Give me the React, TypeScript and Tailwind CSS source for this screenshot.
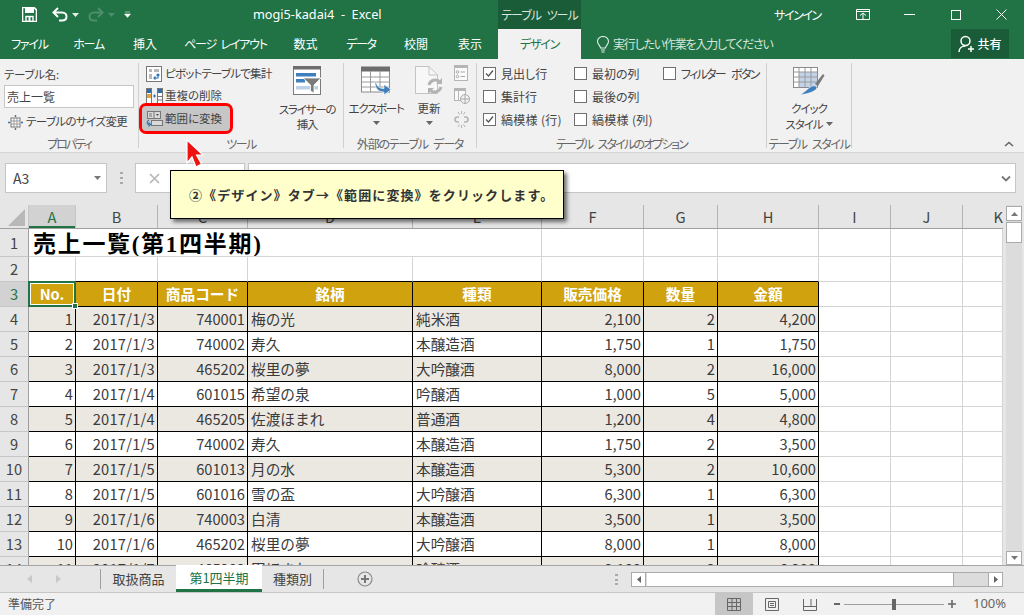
import React from "react";

const UI = "font-['Noto_Sans_CJK_JP','Noto_Sans',sans-serif] [font-feature-settings:'palt']";
const COLS = "grid grid-cols-[29px_47px_82px_90px_165px_129px_102px_74px_101px_72px_72px_40px]";

const rows: (string | number)[][] = [
  [1, "2017/1/3", "740001", "梅の光", "純米酒", "2,100", 2, "4,200"],
  [2, "2017/1/3", "740002", "寿久", "本醸造酒", "1,750", 1, "1,750"],
  [3, "2017/1/3", "465202", "桜里の夢", "大吟醸酒", "8,000", 2, "16,000"],
  [4, "2017/1/4", "601015", "希望の泉", "吟醸酒", "1,000", 5, "5,000"],
  [5, "2017/1/4", "465205", "佐渡ほまれ", "普通酒", "1,200", 4, "4,800"],
  [6, "2017/1/5", "740002", "寿久", "本醸造酒", "1,750", 2, "3,500"],
  [7, "2017/1/5", "601013", "月の水", "本醸造酒", "5,300", 2, "10,600"],
  [8, "2017/1/5", "601016", "雪の盃", "大吟醸酒", "6,300", 1, "6,300"],
  [9, "2017/1/6", "740003", "白清", "本醸造酒", "3,500", 1, "3,500"],
  [10, "2017/1/6", "465202", "桜里の夢", "大吟醸酒", "8,000", 1, "8,000"],
  [11, "2017/1/7", "465203", "田ほまれ", "吟醸酒", "3,100", 2, "6,200"],
];

function Save() {
  return (
    <svg width="15" height="15" viewBox="0 0 15 15" className="text-white">
      <path d="M0.5 0.5H12L14.5 3V14.5H0.5Z" fill="none" stroke="currentColor" strokeWidth="1.6" />
      <rect x="3" y="1" width="9" height="5" fill="currentColor" />
      <rect x="4" y="9.5" width="7" height="5" fill="none" stroke="currentColor" strokeWidth="1.4" />
      <rect x="6.5" y="10" width="2" height="4" fill="currentColor" />
    </svg>
  );
}

function Caret({ className = "" }: { className?: string }) {
  return (
    <svg width="7" height="4" viewBox="0 0 7 4" className={className}>
      <path d="M0 0H7L3.5 4Z" fill="currentColor" />
    </svg>
  );
}

function Undo({ flip = false, className = "" }: { flip?: boolean; className?: string }) {
  return (
    <svg width="16" height="15" viewBox="0 0 16 15" className={className} style={flip ? { transform: "scaleX(-1)" } : undefined}>
      <path d="M2 5.5H10C13 5.5 14.5 7.5 14.5 9.5C14.5 12 12.5 13.5 10 13.5H7" fill="none" stroke="currentColor" strokeWidth="2" />
      <path d="M6 1L1.5 5.5L6 10" fill="none" stroke="currentColor" strokeWidth="2" />
    </svg>
  );
}

function Pivot() {
  return (
    <svg width="16" height="16" viewBox="0 0 16 16" className="shrink-0">
      <rect x="0.5" y="0.5" width="15" height="15" fill="#fff" stroke="#777" />
      <path d="M3 3H6V6H3ZM8 3H13V6H8ZM3 8H6V13H3Z" fill="#b9b9b9" />
      <path d="M8 12H12V8M10.5 9.5L12 8L13.5 9.5M9.5 10.5L8 12L9.5 13.5" fill="none" stroke="#2f78b5" strokeWidth="1.2" />
    </svg>
  );
}

function Dedup() {
  return (
    <svg width="17" height="16" viewBox="0 0 17 16" className="shrink-0">
      <rect x="0.5" y="0.5" width="5" height="15" fill="#fff" stroke="#777" />
      <rect x="11.5" y="0.5" width="5" height="15" fill="#fff" stroke="#777" />
      <rect x="1" y="1" width="4" height="4" fill="#2f6da8" />
      <rect x="12" y="1" width="4" height="4" fill="#2f6da8" />
      <rect x="1" y="6" width="4" height="4" fill="#e3a33c" />
      <path d="M12 8.5H16M12 12H16" stroke="#777" />
      <path d="M7 8H10M8.5 6.5V9.5" stroke="#2f6da8" />
    </svg>
  );
}

function Convert() {
  return (
    <svg width="17" height="16" viewBox="0 0 17 16" className="shrink-0">
      <rect x="1.5" y="0.5" width="13" height="7" fill="#d8d8d8" stroke="#777" />
      <path d="M8 0.5V7.5" stroke="#777" />
      <path d="M3 3H6M3 5H6" stroke="#777" />
      <path d="M10 3H13L11.5 5Z" fill="#555" />
      <rect x="5.5" y="9.5" width="11" height="5" fill="#d8d8d8" stroke="#777" />
      <path d="M3 9C0.5 10 0.5 13.5 3.5 13.5M2.5 11.5L4.5 13.5L2.5 15.5" fill="none" stroke="#2f78b5" strokeWidth="1.1" />
    </svg>
  );
}

function Slicer() {
  return (
    <svg width="29" height="29" viewBox="0 0 29 29">
      <rect x="0.5" y="0.5" width="27" height="28" fill="#fff" stroke="#7a7a7a" />
      <rect x="0" y="0" width="28" height="3.5" fill="#6d6d6d" />
      <rect x="3" y="7" width="20" height="3.5" fill="#3f7fbd" />
      <rect x="3" y="13" width="9" height="3.5" fill="#3f7fbd" />
      <rect x="3" y="20" width="22" height="3.5" fill="#bcd1e8" />
      <path d="M10 12H28L21 19V27L17.5 25V19Z" fill="#7a7a7a" stroke="#fff" strokeWidth="0.8" />
    </svg>
  );
}

function ExportIcon() {
  return (
    <svg width="31" height="30" viewBox="0 0 31 30">
      <rect x="0.5" y="2" width="28" height="24" fill="#fff" stroke="#8a8a8a" />
      <rect x="0" y="0.5" width="29" height="5" fill="#6d6d6d" />
      <path d="M0.5 11H28.5M0.5 16H28.5M0.5 21H28.5M9.5 5V26M19 5V26" stroke="#9a9a9a" />
      <path d="M15 16C16 21 19 22.5 23 22.5V18.5L30 23.5L23 29V26C17 26 14 22 14 16Z" fill="#3f7fbd" stroke="#fff" strokeWidth="0.6" />
    </svg>
  );
}

function RefreshIcon() {
  return (
    <svg width="28" height="30" viewBox="0 0 28 30">
      <path d="M0.5 0.5H14L22.5 9V27.5H0.5Z" fill="#f7f7f7" stroke="#c3c3c3" />
      <path d="M14 0.5V9H22.5" fill="none" stroke="#c3c3c3" />
      <path d="M14 19A6.5 6.5 0 0 1 25 16M26 21A6.5 6.5 0 0 1 15 24" fill="none" stroke="#b3b3b3" strokeWidth="3" />
      <path d="M27 12V18H21ZM13 28V22H19Z" fill="#b3b3b3" />
    </svg>
  );
}

function SmallProps() {
  return (
    <svg width="14" height="16" viewBox="0 0 14 16">
      <rect x="0.5" y="0.5" width="13" height="15" fill="#fafafa" stroke="#b5b5b5" />
      <rect x="0" y="0" width="14" height="3" fill="#b5b5b5" />
      <circle cx="3.5" cy="7" r="1.3" fill="none" stroke="#aaa" />
      <circle cx="3.5" cy="11.5" r="1.3" fill="none" stroke="#aaa" />
      <path d="M6.5 7H11M6.5 11.5H11" stroke="#aaa" />
    </svg>
  );
}

function SmallBrowser() {
  return (
    <svg width="16" height="16" viewBox="0 0 16 16">
      <rect x="0.5" y="0.5" width="11" height="12" fill="#fafafa" stroke="#b5b5b5" />
      <rect x="0" y="0" width="12" height="3" fill="#b5b5b5" />
      <path d="M4.5 3V12" stroke="#b5b5b5" />
      <circle cx="11" cy="11" r="4.5" fill="#f1f1f1" stroke="#aaa" />
      <path d="M6.5 11H15.5M11 6.5V15.5" stroke="#aaa" />
    </svg>
  );
}

function SmallUnlink() {
  return (
    <svg width="15" height="17" viewBox="0 0 15 17">
      <path d="M5 6H3.5A2.5 2.5 0 0 0 3.5 11H5M10 6H11.5A2.5 2.5 0 0 1 11.5 11H10" fill="none" stroke="#b5b5b5" strokeWidth="1.6" />
      <path d="M7.5 0V3M4 1L5.5 3.5M11 1L9.5 3.5M7.5 14V17M4 16L5.5 13.5M11 16L9.5 13.5" stroke="#b5b5b5" />
    </svg>
  );
}

function QuickStyle() {
  return (
    <svg width="32" height="31" viewBox="0 0 32 31">
      <rect x="0.5" y="0.5" width="24" height="20" fill="#fff" stroke="#8a8a8a" />
      <rect x="6" y="5" width="18" height="15" fill="#c2d3e8" />
      <path d="M0.5 5H24.5M0.5 10H24.5M0.5 15H24.5M6 0.5V20.5M12 0.5V20.5M18 0.5V20.5" stroke="#9a9a9a" />
      <path d="M22 17L30 7L31.5 8.5L25 19Z" fill="#7a7a7a" />
      <path d="M19 19C23 18 24.5 20 23.5 22C21 25 14 27 7 28C12 25 15 21 19 19Z" fill="#3f7fbd" stroke="#fff" strokeWidth="0.6" />
    </svg>
  );
}

function Check({ on = false }: { on?: boolean }) {
  return (
    <span className="w-[13px] h-[13px] border border-[#6f6f6f] bg-white flex items-center justify-center shrink-0">
      {on && (
        <svg width="11" height="11" viewBox="0 0 11 11">
          <path d="M2 5.5L4.5 8L9 2.5" fill="none" stroke="#555" strokeWidth="1.3" />
        </svg>
      )}
    </span>
  );
}

function CheckRow({ label, on, className = "" }: { label: string; on?: boolean; className?: string }) {
  return (
    <div className="flex items-center h-[23px] gap-[5px] text-[12px] text-[#444] whitespace-nowrap">
      <Check on={on} />
      <span className={className}>{label}</span>
    </div>
  );
}

function Group({ label, width, labelClass = "", children }: { label: string; width: string; labelClass?: string; children: React.ReactNode }) {
  return (
    <div className={`${width} shrink-0 h-[93px] flex flex-col relative`}>
      <div className="h-[75px] flex">{children}</div>
      <div className={`text-center text-[12px] leading-[16px] mt-[2px] text-[#666] whitespace-nowrap ${labelClass}`}>{label}</div>
    </div>
  );
}

function Sep() {
  return <div className="w-px h-[85px] mt-[4px] bg-[#d0d0d0] shrink-0" />;
}

function Tab({ children, width, tight = true }: { children: React.ReactNode; width: string; tight?: boolean }) {
  return <div className={`${width} shrink-0 text-center whitespace-nowrap [word-spacing:3px] ${tight ? "tracking-[-1.2px]" : ""}`}>{children}</div>;
}

function TitleBar() {
  return (
    <div className="h-[29px] bg-[#217346] flex items-center text-white shrink-0">
      <div className="ml-[22px]"><Save /></div>
      <Undo className="ml-[15px] text-white" />
      <Caret className="ml-[4px] text-[#e4efe9]" />
      <Undo flip className="ml-[9px] text-[#4d8f6b]" />
      <Caret className="ml-[4px] text-[#4d8f6b]" />
      <svg width="7" height="7" viewBox="0 0 7 7" className="ml-[9px]">
        <path d="M1 1H6M0.5 3H6.5L3.5 6.5Z" fill="#fff" stroke="#fff" strokeWidth="0.5" />
      </svg>
      <span className="ml-[122px] w-[245px] text-[12.7px] whitespace-pre font-['Noto_Sans',sans-serif]">mogi5-kadai4  -  Excel</span>
      <div className="w-[83px] h-[29px] bg-[#1a5c38] text-[12px] leading-[29px] text-center text-[#d9e6de] whitespace-nowrap shrink-0 tracking-[-1px] [word-spacing:4px]">テーブル ツール</div>
      <span className="ml-[193px] text-[12px] w-[46px] whitespace-nowrap tracking-[-1.4px]">サインイン</span>
      <svg width="14" height="11" viewBox="0 0 14 11" className="ml-[36px]">
        <path d="M0.5 0.5H13.5V10.5H0.5ZM0.5 2.5H13.5M4 6.5L7 4L10 6.5M7 4.5V10" fill="none" stroke="#fff" />
      </svg>
      <div className="ml-[34px] w-[11px] h-px bg-white" />
      <div className="ml-[36px] w-[10px] h-[10px] border border-white" />
      <svg width="11" height="11" viewBox="0 0 11 11" className="ml-[35px]">
        <path d="M0.5 0.5L10.5 10.5M10.5 0.5L0.5 10.5" stroke="#fff" />
      </svg>
    </div>
  );
}

function TabBar() {
  return (
    <div className="h-[30px] bg-[#217346] flex items-stretch text-white text-[12px] shrink-0 leading-[30px]">
      <Tab width="w-[59px]">ファイル</Tab>
      <Tab width="w-[59px]">ホーム</Tab>
      <Tab width="w-[54px]" tight={false}>挿入</Tab>
      <Tab width="w-[107px]">ページ レイアウト</Tab>
      <Tab width="w-[53px]" tight={false}>数式</Tab>
      <Tab width="w-[58px]">データ</Tab>
      <Tab width="w-[52px]" tight={false}>校閲</Tab>
      <Tab width="w-[56px]" tight={false}>表示</Tab>
      <div className="w-[83px] bg-[#f1f1f1] text-[#217346] text-center shrink-0 tracking-[-1.2px]">デザイン</div>
      <svg width="14" height="17" viewBox="0 0 14 17" className="ml-[15px] mt-[7px] shrink-0">
        <path d="M4.5 12C4.5 9.5 1.5 8.5 1.5 5.5A5.5 5 0 0 1 12.5 5.5C12.5 8.5 9.5 9.5 9.5 12ZM5 14H9M5.5 16H8.5" fill="none" stroke="#e4efe9" strokeWidth="1.1" />
      </svg>
      <span className="ml-[3px] w-[338px] text-[#d5e5db] whitespace-nowrap tracking-[-1.2px]">実行したい作業を入力してください</span>
      <div className="w-[58px] h-[29px] bg-[#1a5c38] flex items-center justify-center gap-[2px] leading-none">
        <svg width="17" height="18" viewBox="0 0 17 18">
          <circle cx="7.5" cy="6" r="4.5" fill="none" stroke="#fff" strokeWidth="1.5" />
          <path d="M1 17C1 13 4 11 7.5 11M10 14H16M13 11V17" fill="none" stroke="#fff" strokeWidth="1.5" />
        </svg>
        <span className="font-medium">共有</span>
      </div>
    </div>
  );
}

function Ribbon() {
  return (
    <div className="h-[94px] bg-[#f1f1f1] border-b border-[#d5d5d5] flex text-[#444] text-[11.5px] shrink-0 relative">
      <Group label="プロパティ" width="w-[138px]" labelClass="tracking-[-2px]">
        <div className="flex flex-col pl-[4px] pt-[7px]">
          <div className="leading-[16px] h-[19px] whitespace-nowrap tracking-[-0.3px]">テーブル名:</div>
          <div className="w-[130px] h-[23px] border border-[#c6c6c6] bg-white pl-[2px] text-[12px] leading-[21px] text-[#444]">売上一覧</div>
          <div className="flex items-center gap-[3px] mt-[2px] h-[24px] pl-[4px] whitespace-nowrap">
            <svg width="15" height="15" viewBox="0 0 15 15" className="shrink-0">
              <rect x="3" y="3" width="9" height="9" fill="#fff" stroke="#777" />
              <path d="M3 6H12M3 9H12M6 3V12M9 3V12" stroke="#999" />
              <path d="M7.5 0V2M7.5 13V15M0 7.5H2M13 7.5H15" stroke="#2f78b5" strokeWidth="1.4" />
            </svg>
            <span className="tracking-[-0.6px]">テーブルのサイズ変更</span>
          </div>
        </div>
      </Group>
      <Sep />
      <Group label="ツール" width="w-[204px]" labelClass="tracking-[-1.5px]">
        <div className="flex flex-col w-[140px] pt-[5px] shrink-0">
          <div className="flex items-center h-[20px] gap-[3px] pl-[7px] whitespace-nowrap"><Pivot /><span className="tracking-[-0.8px]">ピボットテーブルで集計</span></div>
          <div className="flex items-center h-[20px] mt-[2px] gap-[2px] pl-[7px] whitespace-nowrap"><Dedup /><span>重複の削除</span></div>
          <div className="flex items-center w-[94px] h-[31px] -mt-[3px] gap-[2px] pl-[4px] whitespace-nowrap bg-[#c6c6c6] border-[3px] border-[#ff0000] rounded-[7px]"><Convert /><span>範囲に変換</span></div>
        </div>
        <div className="flex flex-col items-center w-[56px] pt-[7px]">
          <Slicer />
          <div className="mt-[7px] leading-[15px] text-center whitespace-nowrap tracking-[-1.2px]">スライサーの<br />挿入</div>
        </div>
      </Group>
      <Sep />
      <Group label="外部のテーブル データ" width="w-[132px]" labelClass="tracking-[-1.2px] [word-spacing:4px]">
        <div className="flex flex-col items-center w-[64px] pt-[7px] shrink-0">
          <ExportIcon />
          <div className="mt-[5px] leading-[15px] whitespace-nowrap tracking-[-1.3px]">エクスポート</div>
          <Caret className="mt-[5px] text-[#666]" />
        </div>
        <div className="flex flex-col items-center w-[42px] pt-[7px] shrink-0">
          <RefreshIcon />
          <div className="mt-[5px] leading-[15px] whitespace-nowrap">更新</div>
          <Caret className="mt-[5px] text-[#666]" />
        </div>
        <div className="flex flex-col items-start pl-[4px] pt-[6px] gap-[7px]">
          <SmallProps />
          <SmallBrowser />
          <SmallUnlink />
        </div>
      </Group>
      <Sep />
      <Group label="テーブル スタイルのオプション" width="w-[289px]" labelClass="tracking-[-1.8px] [word-spacing:4px]">
        <div className="flex pt-[3px] pl-[6px]">
          <div className="w-[91px] shrink-0">
            <CheckRow label="見出し行" on />
            <CheckRow label="集計行" />
            <CheckRow label="縞模様 (行)" on className="tracking-[0.3px]" />
          </div>
          <div className="w-[89px] shrink-0">
            <CheckRow label="最初の列" />
            <CheckRow label="最後の列" />
            <CheckRow label="縞模様 (列)" className="tracking-[0.3px]" />
          </div>
          <div>
            <CheckRow label="フィルター ボタン" className="tracking-[-1.7px] [word-spacing:5px]" />
          </div>
        </div>
      </Group>
      <Sep />
      <Group label="テーブル スタイル" width="w-[84px]" labelClass="tracking-[-1.4px] [word-spacing:4px]">
        <div className="flex flex-col items-center w-full pt-[8px]">
          <QuickStyle />
          <div className="mt-[2px] leading-[16px] text-center whitespace-nowrap tracking-[-1px]">クイック</div>
          <div className="leading-[16px] flex items-center gap-[3px] whitespace-nowrap tracking-[-1px]">スタイル<Caret className="text-[#666]" /></div>
        </div>
      </Group>
      <Sep />
      <svg width="10" height="6" viewBox="0 0 10 6" className="absolute left-[1004px] top-[82px]">
        <path d="M1 5L5 1.5L9 5" fill="none" stroke="#666" strokeWidth="1.6" />
      </svg>
    </div>
  );
}

function FormulaBar() {
  return (
    <div className="h-[52px] bg-[#e6e6e6] flex items-start pt-[10px] shrink-0 text-[#444]">
      <div className="ml-[5px] w-[102px] h-[30px] bg-white border border-[#c6c6c6] flex items-center justify-between pl-[7px] pr-[5px] text-[14px]">
        <span>A3</span>
        <Caret className="text-[#777]" />
      </div>
      <div className="ml-[13px] w-[3px] h-[12px] mt-[9px] flex flex-col justify-between">
        <i className="block w-[3px] h-[2px] bg-[#aaa]" />
        <i className="block w-[3px] h-[2px] bg-[#aaa]" />
        <i className="block w-[3px] h-[2px] bg-[#aaa]" />
      </div>
      <div className="ml-[12px] w-[110px] h-[30px] bg-white border border-[#c6c6c6] flex items-center pl-[13px]">
        <svg width="11" height="11" viewBox="0 0 11 11">
          <path d="M1 1L10 10M10 1L1 10" stroke="#b5b5b5" strokeWidth="1.6" />
        </svg>
      </div>
      <div className="ml-[3px] w-[768px] h-[30px] bg-white border border-[#c6c6c6] flex items-center justify-end pr-[4px]">
        <svg width="10" height="7" viewBox="0 0 10 7">
          <path d="M1 1.5L5 5.5L9 1.5" fill="none" stroke="#777" strokeWidth="1.8" />
        </svg>
      </div>
    </div>
  );
}

function Sheet() {
  const hdr = ["A", "B", "C", "D", "E", "F", "G", "H", "I", "J", "K"];
  const cellBase = "h-full box-border overflow-hidden whitespace-nowrap leading-[24px]";
  const grid = "border-r border-b border-[#d4d4d4]";
  const black = "border-r border-b border-black";
  return (
    <div className="flex-1 min-w-0 h-full overflow-hidden bg-white text-[14.67px] text-[#3a3a3a] font-['Noto_Sans_CJK_JP','Noto_Sans',sans-serif]">
      <div className={`${COLS} h-[23px] bg-[#e6e6e6] border-b border-[#9f9f9f] box-content`}>
        <div className="relative border-r border-[#c6c6c6]">
          <div className="absolute right-[3px] bottom-[2px] w-0 h-0 border-l-[17px] border-l-transparent border-b-[17px] border-b-[#b8b8b8]" />
        </div>
        {hdr.map((h, i) => (
          <div
            key={h}
            className={`text-center leading-[23px] border-r ${i === 0 ? "bg-[#d2d2d2] text-[#217346] border-[#c6c6c6] shadow-[inset_0_-2px_0_#217346]" : "border-[#b4b4b4] text-[#444]"} ${i === 10 ? "border-r-0 text-right" : ""}`}
          >
            {h}
          </div>
        ))}
      </div>
      <div className={`${COLS} h-[28px]`}>
        <div className={`${cellBase} bg-[#e6e6e6] border-r border-b border-r-[#9f9f9f] border-b-[#c6c6c6] text-center text-[#444] leading-[27px]`}>1</div>
        <div className={`${cellBase} border-b border-[#d4d4d4] col-span-4 pl-[4px] text-[23px] font-bold leading-[31px] tracking-[1.7px] text-black font-['Liberation_Serif','Noto_Sans_CJK_JP',serif]`}>売上一覧(第1四半期)</div>
        <div className={`${cellBase} ${grid}`} />
        <div className={`${cellBase} ${grid}`} />
        <div className={`${cellBase} ${grid}`} />
        <div className={`${cellBase} ${grid}`} />
        <div className={`${cellBase} ${grid}`} />
        <div className={`${cellBase} ${grid}`} />
        <div className={`${cellBase} ${grid}`} />
      </div>
      <div className={`${COLS} h-[25px]`}>
        <div className={`${cellBase} bg-[#e6e6e6] border-r border-b border-r-[#9f9f9f] border-b-[#c6c6c6] text-center text-[#444]`}>2</div>
        {hdr.map((h, i) => (
          <div key={h} className={`${cellBase} border-r ${i < 8 ? "border-b border-r-[#d4d4d4] border-b-black" : "border-b border-[#d4d4d4]"}`} />
        ))}
      </div>
      <div className={`${COLS} h-[25px]`}>
        <div className={`${cellBase} bg-[#d2d2d2] border-r border-b border-r-[#9f9f9f] border-b-[#c6c6c6] text-center text-[#217346]`}>3</div>
        {["No.", "日付", "商品コード", "銘柄", "種類", "販売価格", "数量", "金額"].map((h, i) => (
          <div key={h} className={`${cellBase} relative bg-[#cfa20e] text-white font-bold text-center ${black} ${i === 0 ? "overflow-visible" : ""}`}>
            {h}
            {i === 0 && (
              <>
                <div className="absolute -left-[1px] -top-[1px] -right-[1px] -bottom-[1px] border-2 border-[#217346]" />
                <div className="absolute left-[1px] top-[1px] right-[1px] bottom-[1px] border border-white" />
                <div className="absolute -right-[3px] -bottom-[3px] w-[6px] h-[6px] bg-[#217346] border border-white z-10" />
              </>
            )}
          </div>
        ))}
        {["I", "J", "K"].map((k) => <div key={k} className={`${cellBase} ${grid}`} />)}
      </div>
      {rows.map((r, ri) => {
        const shade = ri % 2 === 0 ? "bg-[#ebe8e2]" : "bg-white";
        return (
          <div key={ri} className={`${COLS} h-[25px]`}>
            <div className={`${cellBase} bg-[#e6e6e6] border-r border-b border-r-[#9f9f9f] border-b-[#c6c6c6] text-center text-[#444]`}>{ri + 4}</div>
            {r.map((v, ci) => {
              const left = ci === 3 || ci === 4;
              return (
                <div key={ci} className={`${cellBase} ${shade} ${black} ${left ? "pl-[3px] text-left" : "pr-[2px] text-right"} ${ci === 1 ? "tracking-[0.25px]" : ""}`}>
                  {v}
                </div>
              );
            })}
            {["I", "J", "K"].map((k) => <div key={k} className={`${cellBase} ${grid}`} />)}
          </div>
        );
      })}
    </div>
  );
}

function VScroll() {
  return (
    <div className="w-[21px] h-full shrink-0 bg-[#e6e6e6] flex">
      <div className="w-[16px] ml-[3px] bg-[#dcdcdc] flex flex-col justify-between h-full pt-[1px]">
        <div>
          <div className="h-[15px] bg-white border border-[#ababab] flex items-center justify-center">
            <svg width="7" height="4" viewBox="0 0 7 4" className="text-[#777]"><path d="M0 4H7L3.5 0Z" fill="currentColor" /></svg>
          </div>
          <div className="h-[21px] mt-px bg-white border border-[#ababab]" />
        </div>
        <div className="h-[14px] bg-white border border-[#ababab] flex items-center justify-center">
          <Caret className="text-[#777]" />
        </div>
      </div>
    </div>
  );
}

function SheetTabs() {
  return (
    <div className="h-[28px] bg-[#e6e6e6] border-t border-b border-t-[#a5a5a5] border-b-[#c6c6c6] flex items-stretch text-[13px] text-[#444] shrink-0 font-['Noto_Sans_CJK_JP',sans-serif] box-border [font-feature-settings:normal]">
      <svg width="5" height="8" viewBox="0 0 5 8" className="ml-[27px] mt-[9px] text-[#c8c8c8]"><path d="M5 0V8L0 4Z" fill="currentColor" /></svg>
      <svg width="5" height="8" viewBox="0 0 5 8" className="ml-[24px] mt-[9px] text-[#c8c8c8]"><path d="M0 0V8L5 4Z" fill="currentColor" /></svg>
      <div className="ml-[39px] w-px h-[20px] mt-[3px] bg-[#9f9f9f]" />
      <div className="w-[75px] text-center leading-[26px] whitespace-nowrap">取扱商品</div>
      <div className="w-[86px] -mt-px h-[27px] box-border bg-white text-[#217346] text-center leading-[26px] border-b-[3px] border-[#217346] whitespace-nowrap">第1四半期</div>
      <div className="w-[61px] text-center leading-[26px] whitespace-nowrap">種類別</div>
      <div className="w-px h-[20px] mt-[3px] bg-[#9f9f9f]" />
      <svg width="16" height="16" viewBox="0 0 16 16" className="ml-[33px] mt-[5px]">
        <circle cx="8" cy="8" r="7" fill="none" stroke="#8a8a8a" strokeWidth="1.2" />
        <path d="M8 4V12M4 8H12" stroke="#777" strokeWidth="2" />
      </svg>
      <div className="ml-[242px] mt-[8px] w-[3px] h-[11px] flex flex-col justify-between">
        <i className="block w-[3px] h-[2px] bg-[#aaa]" />
        <i className="block w-[3px] h-[2px] bg-[#aaa]" />
        <i className="block w-[3px] h-[2px] bg-[#aaa]" />
      </div>
      <div className="ml-[13px] mt-[6px] w-[372px] h-[15px] flex box-border border border-[#ababab] bg-[#dcdcdc]">
        <div className="w-[14px] bg-white border-r border-[#ababab] flex items-center justify-center">
          <svg width="4" height="7" viewBox="0 0 4 7" className="text-[#666]"><path d="M4 0V7L0 3.5Z" fill="currentColor" /></svg>
        </div>
        <div className="w-[307px] bg-white border-r border-[#ababab] ml-px" />
        <div className="flex-1" />
        <div className="w-[14px] bg-white border-l border-[#ababab] flex items-center justify-center">
          <svg width="4" height="7" viewBox="0 0 4 7" className="text-[#666]"><path d="M0 0V7L4 3.5Z" fill="currentColor" /></svg>
        </div>
      </div>
    </div>
  );
}

function StatusBar() {
  return (
    <div className="h-[22px] bg-[#f1f1f1] flex items-stretch text-[12px] text-[#555] shrink-0">
      <span className="ml-[8px] w-[707px] leading-[21px] whitespace-nowrap">準備完了</span>
      <div className="w-[38px] bg-[#c6c6c6] flex items-center justify-center">
        <svg width="14" height="13" viewBox="0 0 14 13"><path d="M0.5 0.5H13.5V12.5H0.5ZM0.5 4.5H13.5M0.5 8.5H13.5M5 0.5V12.5M9.5 0.5V12.5" fill="none" stroke="#666" /></svg>
      </div>
      <div className="w-[38px] flex items-center justify-center">
        <svg width="14" height="13" viewBox="0 0 14 13"><path d="M0.5 0.5H13.5V12.5H0.5ZM3.5 3.5H10.5V9.5H3.5ZM5 5.5H9M5 7.5H9" fill="none" stroke="#666" /></svg>
      </div>
      <div className="w-[38px] flex items-center justify-center">
        <svg width="14" height="13" viewBox="0 0 14 13"><path d="M0.5 1V12.5H13.5V1M0.5 8.5H13.5M8 1V8.5" fill="none" stroke="#666" /></svg>
      </div>
      <div className="ml-[5px] w-[6px] h-[2px] self-center bg-[#666]" />
      <div className="ml-[4px] w-[100px] self-center h-px bg-[#9f9f9f] relative">
        <div className="absolute left-[48px] -top-[5px] w-[4px] h-[11px] bg-[#666]" />
      </div>
      <svg width="8" height="8" viewBox="0 0 8 8" className="self-center ml-[4px]"><path d="M0 4H8M4 0V8" stroke="#666" strokeWidth="1.6" /></svg>
      <span className="ml-[17px] leading-[21px] text-[#666] font-['Noto_Sans',sans-serif] text-[13px]">100%</span>
    </div>
  );
}

export default function App() {
  return (
    <div className={`w-[1024px] h-[615px] overflow-hidden relative flex flex-col bg-[#e6e6e6] ${UI}`}>
      <TitleBar />
      <TabBar />
      <Ribbon />
      <FormulaBar />
      <div className="h-[360px] flex shrink-0 [font-feature-settings:normal]">
        <Sheet />
        <VScroll />
      </div>
      <SheetTabs />
      <StatusBar />
      <svg width="22" height="32" viewBox="0 0 22 32" className="absolute left-[185px] top-[138px]">
        <path d="M2 2V25L7 19L11 29L16.5 26L11.5 17H18Z" fill="#ee1111" stroke="#fff" strokeWidth="1.2" />
      </svg>
      <div className="absolute left-[170px] top-[170px] w-[394px] h-[49px] bg-[#ffffcc] border-[1.5px] border-black shadow-[3px_3px_4px_rgba(0,0,0,0.55)] flex items-center pl-[18px] text-[13px] font-bold text-[#333] whitespace-nowrap tracking-[1.1px] [font-feature-settings:normal]">
        ②《デザイン》タブ→《範囲に変換》をクリックします。
      </div>
    </div>
  );
}
